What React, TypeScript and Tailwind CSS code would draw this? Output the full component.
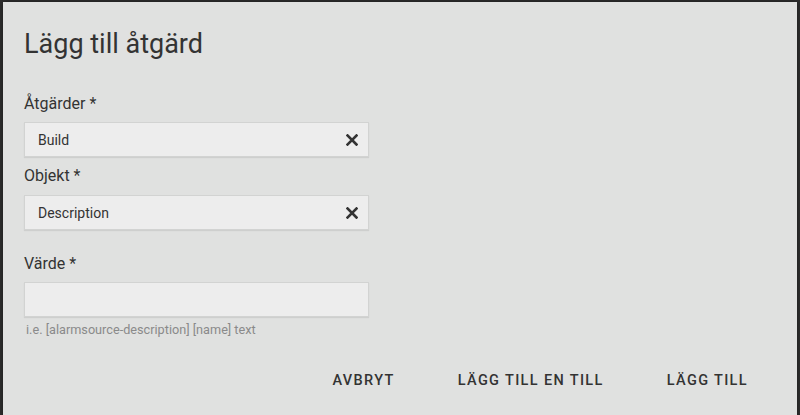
import React from "react";

function ClearIcon() {
  return (
    <svg width="12" height="12" viewBox="0 0 12 12" className="shrink-0">
      <path d="M1.5 1.5 L10.5 10.5 M10.5 1.5 L1.5 10.5" stroke="#333" strokeWidth="2.6" strokeLinecap="square" />
    </svg>
  );
}

function Field({ value, clearable }: { value?: string; clearable?: boolean }) {
  return (
    <div className="flex h-[35px] w-[345px] items-center justify-between border border-[#d2d3d2] bg-[#ededed] pl-[13px] pr-[10px] shadow-[0_1px_1px_rgba(0,0,0,0.08)]">
      <span className="text-[14px] leading-[20px] text-[#333]">{value}</span>
      {clearable && <ClearIcon />}
    </div>
  );
}

export default function App() {
  return (
    <div
      className="h-[415px] w-[800px] overflow-hidden bg-[#2e2e2e] pl-[3px] pr-[3px] pt-[2px]"
      style={{ fontFamily: "Roboto, 'Noto Sans', sans-serif" }}
    >
      <div className="h-[420px] bg-[#e0e1e0] pl-[21px] pt-[26px] shadow-[0_0_6px_rgba(0,0,0,0.4)]">
        <h1 className="text-[27px] leading-[32px] font-normal text-[#333]">Lägg till åtgärd</h1>

        <div className="mt-[32px] text-[16px] leading-[24px] text-[#333]">Åtgärder *</div>
        <div className="mt-[6px]">
          <Field value="Build" clearable />
        </div>

        <div className="mt-[7px] text-[16px] leading-[24px] text-[#333]">Objekt *</div>
        <div className="mt-[7px]">
          <Field value="Description" clearable />
        </div>

        <div className="mt-[22px] text-[16px] leading-[24px] text-[#333]">Värde *</div>
        <div className="mt-[6px]">
          <Field />
        </div>
        <div className="mt-[5px] pl-[2px] text-[12.7px] leading-[16px] text-[#8a8a8a]">
          i.e. [alarmsource-description] [name] text
        </div>

        <div className="mt-[33px] flex justify-end gap-[31px] pr-[33px]">
          <button className="px-4 text-[14.5px] leading-[20px] font-medium uppercase tracking-[1.35px] text-[#333]">
            Avbryt
          </button>
          <button className="px-4 text-[14.5px] leading-[20px] font-medium uppercase tracking-[1.35px] text-[#333]">
            Lägg till en till
          </button>
          <button className="px-4 text-[14.5px] leading-[20px] font-medium uppercase tracking-[1.35px] text-[#333]">
            Lägg till
          </button>
        </div>
      </div>
    </div>
  );
}
